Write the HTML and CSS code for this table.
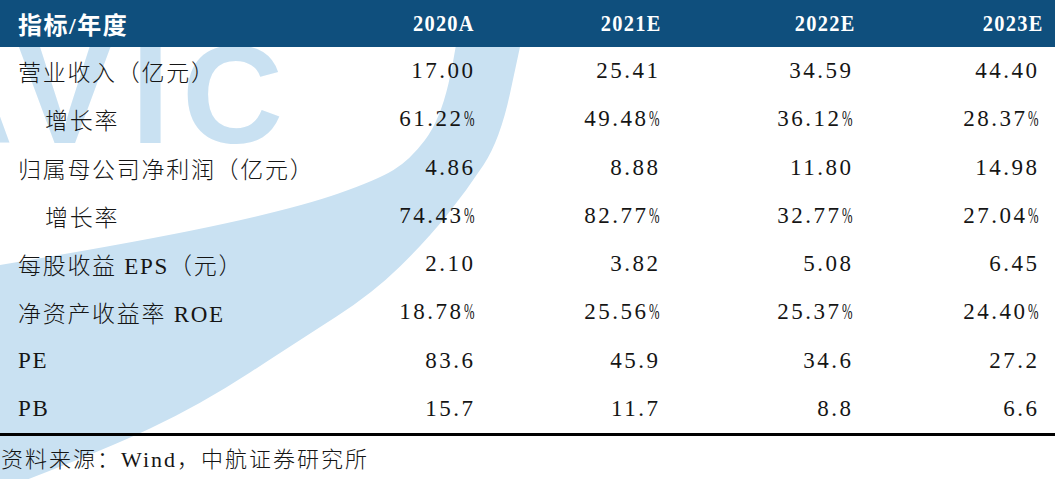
FILE: index.html
```html
<!DOCTYPE html>
<html lang="zh-CN">
<head>
<meta charset="utf-8">
<title>盈利预测</title>
<link rel="stylesheet" href="styles.css">
</head>
<body>
<div class="page">
  <svg class="watermark" width="1055" height="479" viewBox="0 0 1055 479" aria-hidden="true">
    <path class="swoosh" d="M 530 0 Q 520 47 510 93.5 Q 500 140 483.5 165 Q 467 190 447 215 Q 427 240 400 266.5 Q 373 293 336.5 316.5 Q 300 340 250 372.5 Q 200 405 150 428.5 Q 100 452 0 490 L 0 265 Q 150 240 225 223.5 Q 300 207 338.5 193.5 Q 377 180 393.5 170 Q 410 160 425 140 Q 440 120 448.5 83.5 Q 457 47 462 0 Z"/>
    <text class="wm-text" y="143"><tspan x="-88">A</tspan><tspan x="18">V</tspan><tspan x="131">I</tspan><tspan x="182">C</tspan></text>
  </svg>

  <div class="tbl">
    <table class="fin">
      <colgroup>
        <col class="w-label"><col class="w-c1"><col class="w-c2"><col class="w-c3"><col class="w-c4">
      </colgroup>
      <thead>
        <tr>
          <th class="label">指标/年度</th>
          <th class="y1"><span class="yr">2020A</span></th>
          <th class="y2"><span class="yr">2021E</span></th>
          <th class="y3"><span class="yr">2022E</span></th>
          <th class="y4"><span class="yr">2023E</span></th>
        </tr>
      </thead>
      <tbody>
        <tr>
          <td class="label">营业收入（亿元）</td>
          <td class="n">17.00</td><td class="n">25.41</td><td class="n">34.59</td><td class="n last">44.40</td>
        </tr>
        <tr>
          <td class="label sub">增长率</td>
          <td class="n">61.22<span class="pct"><span>%</span></span></td><td class="n">49.48<span class="pct"><span>%</span></span></td><td class="n">36.12<span class="pct"><span>%</span></span></td><td class="n last">28.37<span class="pct"><span>%</span></span></td>
        </tr>
        <tr>
          <td class="label">归属母公司净利润（亿元）</td>
          <td class="n">4.86</td><td class="n">8.88</td><td class="n">11.80</td><td class="n last">14.98</td>
        </tr>
        <tr>
          <td class="label sub">增长率</td>
          <td class="n">74.43<span class="pct"><span>%</span></span></td><td class="n">82.77<span class="pct"><span>%</span></span></td><td class="n">32.77<span class="pct"><span>%</span></span></td><td class="n last">27.04<span class="pct"><span>%</span></span></td>
        </tr>
        <tr>
          <td class="label">每股收益 EPS（元）</td>
          <td class="n">2.10</td><td class="n">3.82</td><td class="n">5.08</td><td class="n last">6.45</td>
        </tr>
        <tr>
          <td class="label">净资产收益率 ROE</td>
          <td class="n">18.78<span class="pct"><span>%</span></span></td><td class="n">25.56<span class="pct"><span>%</span></span></td><td class="n">25.37<span class="pct"><span>%</span></span></td><td class="n last">24.40<span class="pct"><span>%</span></span></td>
        </tr>
        <tr>
          <td class="label">PE</td>
          <td class="n">83.6</td><td class="n">45.9</td><td class="n">34.6</td><td class="n last">27.2</td>
        </tr>
        <tr>
          <td class="label">PB</td>
          <td class="n">15.7</td><td class="n">11.7</td><td class="n">8.8</td><td class="n last">6.6</td>
        </tr>
      </tbody>
    </table>
  </div>

  <p class="source">资料来源：Wind，中航证券研究所</p>
</div>
</body>
</html>
```

FILE: styles.css
```css
html, body {
  margin: 0;
  padding: 0;
  background: #ffffff;
}

.page {
  position: relative;
  width: 1055px;
  height: 479px;
  overflow: hidden;
  background: #ffffff;
  font-family: "Liberation Serif", "Noto Sans CJK SC", serif;
  color: #151515;
}

.watermark {
  position: absolute;
  top: 0;
  left: 0;
  z-index: 0;
}

.swoosh {
  fill: #c9e1f2;
}

.wm-text {
  fill: #c9e1f2;
  font-family: "Liberation Sans", Arial, sans-serif;
  font-weight: 700;
  font-size: 140px;
}

.tbl {
  position: relative;
  z-index: 1;
  border-bottom: 3px solid #000000;
}

.fin {
  width: 1055px;
  border-collapse: collapse;
  table-layout: fixed;
}

.w-label { width: 300px; }
.w-c1 { width: 180px; }
.w-c2 { width: 185px; }
.w-c3 { width: 193px; }
.w-c4 { width: 197px; }

.fin thead tr {
  background: #0f4f7d;
  height: 47px;
}

.fin th {
  padding: 0;
  color: #ffffff;
  font-weight: 700;
  vertical-align: middle;
  text-align: right;
  white-space: nowrap;
}

.fin th.label {
  text-align: left;
  padding-left: 18px;
  font-size: 24px;
  letter-spacing: 1.5px;
}

.yr {
  display: inline-block;
  font-size: 24px;
  letter-spacing: 1.5px;
  transform: scaleX(0.85);
  transform-origin: right center;
}

.fin th.y1 { padding-right: 5px; }
.fin th.y2 { padding-right: 3px; }
.fin th.y3 { padding-right: 2px; }
.fin th.y4 { padding-right: 11px; }

.fin tbody tr {
  height: 48.25px;
}

.fin td {
  padding: 0;
  vertical-align: middle;
  white-space: nowrap;
  font-weight: 300;
}

.fin td.label {
  text-align: left;
  padding-left: 18px;
  font-size: 23px;
  letter-spacing: 1.7px;
}

.fin td.label.sub {
  padding-left: 45px;
}

.fin td.n {
  text-align: right;
  font-size: 23px;
  letter-spacing: 2.5px;
  padding-right: 4.5px;
}

.fin td.n.last {
  padding-right: 15.5px;
}

.pct {
  display: inline-block;
  width: 12px;
  text-align: left;
  letter-spacing: 0;
}

.pct span {
  display: inline-block;
  transform: scaleX(0.55);
  transform-origin: left center;
}

.source {
  position: relative;
  z-index: 1;
  margin: 0;
  padding-left: 1px;
  height: 48px;
  line-height: 48px;
  font-size: 22px;
  letter-spacing: 2px;
  font-weight: 300;
  white-space: nowrap;
}
```
